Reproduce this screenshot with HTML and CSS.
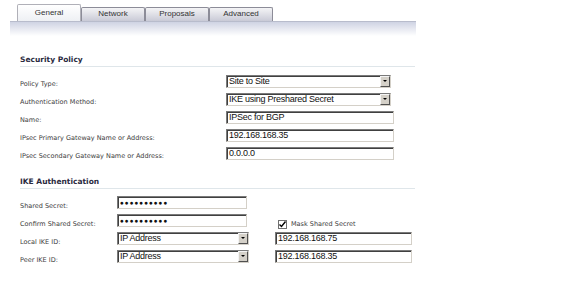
FILE: index.html
```html
<!DOCTYPE html>
<html>
<head>
<meta charset="utf-8">
<link rel="stylesheet" href="styles.css">
</head>
<body>
<div class="tabs">
  <div class="tab active">General</div>
  <div class="tab">Network</div>
  <div class="tab">Proposals</div>
  <div class="tab">Advanced</div>
</div>
<div class="band"></div>

<div class="section sp">
  <div class="sec-head">Security Policy</div>
  <div class="grid1">
    <div class="lbl">Policy Type:</div>
    <div class="select w164"><span class="val">Site to Site</span><span class="arrow"></span></div>
    <div class="lbl">Authentication Method:</div>
    <div class="select w164"><span class="val">IKE using Preshared Secret</span><span class="arrow"></span></div>
    <div class="lbl">Name:</div>
    <div class="input w168">IPSec for BGP</div>
    <div class="lbl">IPsec Primary Gateway Name or Address:</div>
    <div class="input w168">192.168.168.35</div>
    <div class="lbl">IPsec Secondary Gateway Name or Address:</div>
    <div class="input w168">0.0.0.0</div>
  </div>
</div>

<div class="section ike">
  <div class="sec-head">IKE Authentication</div>
  <div class="grid2">
    <div class="lbl">Shared Secret:</div>
    <div class="input w130 dots">●●●●●●●●●●</div>
    <div></div>
    <div class="lbl">Confirm Shared Secret:</div>
    <div class="input w130 dots">●●●●●●●●●●</div>
    <div class="check"><span class="box"><svg width="9" height="9" viewBox="0 0 9 9"><path d="M1.5 4.5 L3.5 6.5 L7.5 1.5" fill="none" stroke="#000" stroke-width="1.4"/></svg></span><span class="clbl">Mask Shared Secret</span></div>
    <div class="lbl">Local IKE ID:</div>
    <div class="select w132"><span class="val">IP Address</span><span class="arrow"></span></div>
    <div class="input w137">192.168.168.75</div>
    <div class="lbl">Peer IKE ID:</div>
    <div class="select w132"><span class="val">IP Address</span><span class="arrow"></span></div>
    <div class="input w137">192.168.168.35</div>
  </div>
</div>
</body>
</html>
```
FILE: styles.css
```css
html, body {
  margin: 0;
  padding: 0;
  background: #fff;
}
body {
  width: 576px;
  height: 285px;
  overflow: hidden;
  font-family: "DejaVu Sans", Verdana, sans-serif;
}
.tabs {
  display: flex;
  align-items: flex-end;
  padding: 4px 0 0 17px;
  height: 17px;
}
.tab {
  box-sizing: border-box;
  width: 64px;
  height: 14px;
  border: 1px solid #8c8c98;
  border-bottom: none;
  border-radius: 2px 2px 0 0;
  background: linear-gradient(#f4f4f6, #c9cad6);
  font-family: "Liberation Sans", Arial, sans-serif;
  font-size: 8px;
  color: #333;
  text-align: center;
  line-height: 11px;
}
.tab.active {
  height: 17px;
  border-color: #b0b0b8;
  background: linear-gradient(#ffffff, #eef0f4);
  line-height: 16px;
}
.band {
  margin-left: 10px;
  width: 406px;
  height: 14px;
  border-top: 1px solid #b8bccc;
  background: linear-gradient(#cfd3e3, #ffffff);
}
.section {
  margin-left: 20px;
  width: 395px;
}
.sp { margin-top: 19px; }
.ike { margin-top: 15px; }
.sec-head {
  font-size: 7.5px;
  font-weight: bold;
  color: #2a2a40;
  border-bottom: 1px solid #dfe6ea;
  padding-bottom: 2px;
  line-height: 9px;
}
.grid1 {
  display: grid;
  grid-template-columns: 206px auto;
  grid-auto-rows: 18px;
  align-items: center;
  padding-top: 5px;
}
.grid2 {
  display: grid;
  grid-template-columns: 97px 158px auto;
  grid-auto-rows: 18px;
  align-items: center;
  padding-top: 4px;
}
.lbl {
  font-size: 6.5px;
  color: #3c3c3c;
  padding-top: 6px;
}
.grid2 .lbl { padding-top: 7px; }
.select, .input {
  box-sizing: border-box;
  height: 13px;
  border: 1px solid #7a7a7a;
  border-right-color: #d4d0c8;
  border-bottom-color: #d4d0c8;
  box-shadow: inset 1px 1px 0 #404040;
  background: #fff;
  font-family: "Liberation Sans", Arial, sans-serif;
  font-size: 9px;
  color: #111;
  display: flex;
  align-items: center;
  padding-left: 2px;
  letter-spacing: -0.25px;
}
.select { justify-content: space-between; padding-right: 0; }
.select .arrow {
  box-sizing: border-box;
  width: 10px;
  height: 11px;
  background: #d4d0c8;
  border: 1px solid;
  border-color: #f4f4f4 #505050 #505050 #f4f4f4;
  position: relative;
}
.select .arrow::after {
  content: "";
  position: absolute;
  left: 2px;
  top: 3px;
  border-left: 2px solid transparent;
  border-right: 2px solid transparent;
  border-top: 2px solid #000;
}
.w164 { width: 165px; }
.w168 { width: 168px; }
.w130 { width: 130px; }
.w132 { width: 132px; }
.w137 { width: 137px; }
.dots { font-size: 6.5px; letter-spacing: 0.9px; padding-top: 1px; }
.check {
  display: flex;
  align-items: center;
  gap: 4px;
  padding-left: 3px;
  padding-top: 8px;
}
.box {
  box-sizing: border-box;
  width: 9px;
  height: 9px;
  border: 1px solid #707070;
  background: #fff;
  display: flex;
}
.box svg { display: block; margin: -1px; }
.clbl { font-size: 6.5px; color: #3c3c3c; }
```
